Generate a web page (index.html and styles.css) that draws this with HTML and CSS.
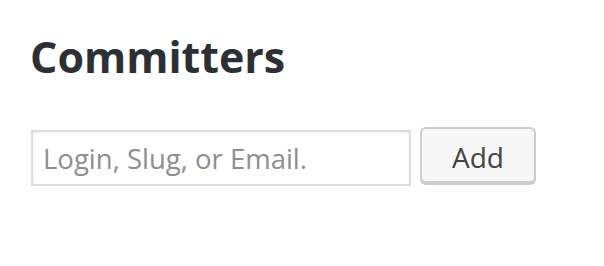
FILE: index.html
```html
<!DOCTYPE html>
<html lang="en">
<head>
  <meta charset="UTF-8" />
  <title>Committers</title>
  <link rel="stylesheet" href="styles.css">
</head>
<body>
  <section class="committers">
    <h2>Committers</h2>
    <form class="add-committer">
      <input type="text" class="committer-input" placeholder="Login, Slug, or Email." />
      <button type="button" class="button">Add</button>
    </form>
  </section>
</body>
</html>
```

FILE: styles.css
```css
body {
  font-family: 'Open Sans', sans-serif;
  background-color: #ffffff;
  color: #32373c;
  margin: 0;
  padding: 0;
}

.committers {
  padding: 27px 30px;
}

.committers h2 {
  font-size: 43px;
  font-weight: 700;
  margin: 0 0 40px;
  line-height: 60px;
  color: #2c3035;
}

.add-committer {
  display: flex;
  align-items: flex-start;
  gap: 9px;
}

.committer-input {
  width: 380px;
  height: 56px;
  box-sizing: border-box;
  border: 2px solid #dddddd;
  box-shadow: inset 0 1px 2px rgba(0, 0, 0, 0.07);
  padding: 0 10px;
  font-family: 'Open Sans', sans-serif;
  font-size: 27.5px;
  color: #32373c;
  margin: 3px 0 0 1px;
}

.committer-input::placeholder {
  color: #8e8e8e;
}

.button {
  width: 116px;
  height: 56px;
  box-sizing: border-box;
  background: #f7f7f7;
  border: 2px solid #cccccc;
  border-radius: 6px;
  box-shadow: 0 2px 0 #cccccc;
  font-family: 'Open Sans', sans-serif;
  font-size: 28px;
  color: #444444;
  padding: 3px 0 0;
  cursor: pointer;
}
```
